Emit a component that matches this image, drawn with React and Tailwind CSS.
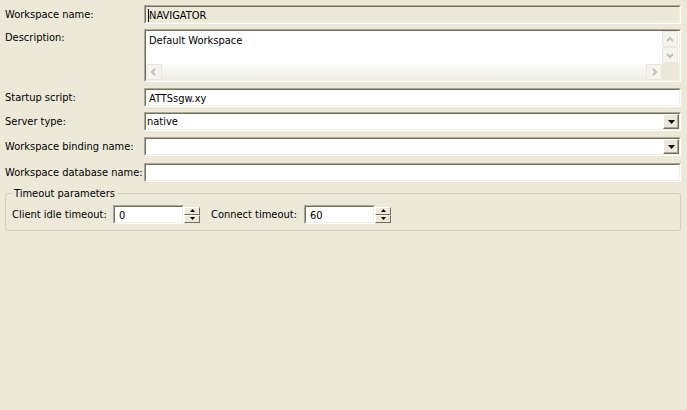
import React from "react";

const font = { fontFamily: '"DejaVu Sans Condensed", "DejaVu Sans", Tahoma, sans-serif', fontStretch: "condensed" };

const Sunken = ({ className = "", inner = "bg-white", children }) => (
  <div className={`border border-t-[#aca899] border-l-[#aca899] border-b-white border-r-white ${className}`}>
    <div className={`h-full border border-t-[#716f64] border-l-[#716f64] border-b-[#f1efe2] border-r-[#f1efe2] ${inner}`}>
      {children}
    </div>
  </div>
);

const Arrow = ({ dir, color = "#c2c0b5" }) => {
  const paths = {
    up: "M3 8 L6 5 L9 8",
    down: "M3 5 L6 8 L9 5",
    left: "M7 3 L4 6 L7 9",
    right: "M5 3 L8 6 L5 9"
  };
  return (
    <svg width="12" height="12" viewBox="0 0 12 12">
      <path d={paths[dir]} fill="none" stroke={color} strokeWidth="2" />
    </svg>
  );
};

const ScrollBtn = ({ dir }) => (
  <div className="flex h-[16px] w-[16px] items-center justify-center rounded-[2px] border border-[#e8e6de] bg-[#f5f4ef]">
    <Arrow dir={dir} />
  </div>
);

const DropBtn = () => (
  <div className="flex h-[15px] w-[16px] items-center justify-center border border-t-white border-l-white border-b-[#716f64] border-r-[#716f64] bg-[#ece9d8] shadow-[inset_-1px_-1px_0_#aca899]">
    <svg width="7" height="4" viewBox="0 0 7 4">
      <path d="M0 0 H7 L3.5 4 Z" fill="#000" />
    </svg>
  </div>
);

const SpinBtn = ({ up }) => (
  <div className="flex h-[8px] w-[16px] items-center justify-center border border-t-white border-l-white border-b-[#716f64] border-r-[#716f64] bg-[#ece9d8]">
    <svg width="5" height="3" viewBox="0 0 5 3">
      <path d={up ? "M0 3 H5 L2.5 0 Z" : "M0 0 H5 L2.5 3 Z"} fill="#000" />
    </svg>
  </div>
);

const Spinner = ({ value }) => (
  <div className="flex items-center">
    <Sunken className="h-[19px] w-[71px]">
      <div className="px-[4px] pt-[2px] text-[11px] leading-[13px] text-black">{value}</div>
    </Sunken>
    <div className="flex flex-col">
      <SpinBtn up />
      <SpinBtn />
    </div>
  </div>
);

const Label = ({ children, className = "" }) => (
  <div className={`w-[139px] shrink-0 whitespace-nowrap text-[11px] leading-[13px] text-black ${className}`}>{children}</div>
);

export default function App() {
  return (
    <div className="h-[410px] w-[687px] bg-[#ece9d8] pl-[5px] pr-[6px] pt-[5px]" style={font}>
      <div className="flex items-center">
        <Label className="pb-[1px]">Workspace name:</Label>
        <Sunken className="h-[19px] flex-1" inner="bg-[#ece9d8]">
          <div className="px-[2px] pt-[2px] text-[11px] leading-[13px] text-[#000]">
            <span className="border-l border-black">NAVIGATOR</span>
          </div>
        </Sunken>
      </div>

      <div className="mt-[5px] flex items-start">
        <Label className="pt-[2px]">Description:</Label>
        <Sunken className="h-[53px] flex-1">
          <div className="flex h-full">
            <div className="flex flex-1 flex-col">
              <div className="flex-1 px-[3px] pt-[3px] text-[11px] leading-[13px] text-black">Default Workspace</div>
              <div className="flex h-[17px] items-center justify-between bg-gradient-to-b from-[#fdfdfb] to-[#eeede5]">
                <ScrollBtn dir="left" />
                <ScrollBtn dir="right" />
              </div>
            </div>
            <div className="flex w-[17px] flex-col bg-[#ece9d8]">
              <div className="flex flex-col bg-[#fdfdfb]">
                <ScrollBtn dir="up" />
                <ScrollBtn dir="down" />
              </div>
            </div>
          </div>
        </Sunken>
      </div>

      <div className="mt-[6px] flex items-center">
        <Label>Startup script:</Label>
        <Sunken className="h-[19px] flex-1">
          <div className="px-[3px] pt-[2px] text-[11px] leading-[13px] text-black">ATTSsgw.xy</div>
        </Sunken>
      </div>

      <div className="mt-[5px] flex items-center">
        <Label>Server type:</Label>
        <Sunken className="h-[19px] flex-1">
          <div className="flex h-full items-center justify-between">
            <div className="px-[1px] text-[11px] leading-[13px] text-black">native</div>
            <DropBtn />
          </div>
        </Sunken>
      </div>

      <div className="mt-[6px] flex items-center">
        <Label>Workspace binding name:</Label>
        <Sunken className="h-[19px] flex-1">
          <div className="flex h-full items-center justify-end">
            <DropBtn />
          </div>
        </Sunken>
      </div>

      <div className="mt-[7px] flex items-center">
        <Label>Workspace database name:</Label>
        <Sunken className="h-[19px] flex-1" />
      </div>

      <div className="relative mt-[11px] h-[38px] rounded-[3px] border border-[#d0d0bf]">
        <div className="absolute -top-[7px] left-[6px] bg-[#ece9d8] px-[2px] text-[11px] leading-[13px] text-black">
          Timeout parameters
        </div>
        <div className="flex items-center pl-[6px] pt-[11px]">
          <div className="w-[101px] whitespace-nowrap text-[11px] leading-[13px] text-black">Client idle timeout:</div>
          <Spinner value="0" />
          <div className="ml-[11px] w-[93px] whitespace-nowrap text-[11px] leading-[13px] text-black">Connect timeout:</div>
          <Spinner value="60" />
        </div>
      </div>
    </div>
  );
}
